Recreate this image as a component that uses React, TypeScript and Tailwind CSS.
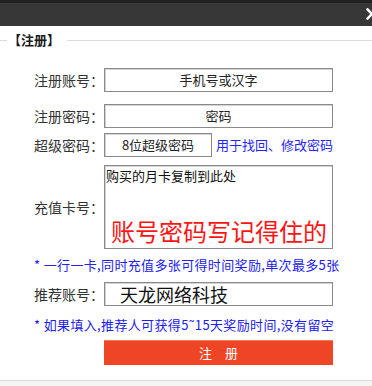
import React from "react";

const font = { fontFamily: '"Noto Sans CJK SC", "Noto Sans", sans-serif' };

function Label({ children }: { children: React.ReactNode }) {
  return (
    <div className="w-[70px] shrink-0 text-[14px] leading-[16px] text-[#333]">{children}</div>
  );
}

const boxCls =
  "border border-[#8a8a8a] shadow-[inset_1px_1px_0_#d4d4d4] bg-white";

export default function App() {
  return (
    <div className="w-[372px] h-[386px] bg-white flex flex-col overflow-hidden" style={font}>
      {/* top bar */}
      <div className="h-[26px] shrink-0 bg-[#373737] border-t-[3px] border-[#222] flex items-center justify-end overflow-hidden">
        <svg width="12" height="12" viewBox="0 0 12 12" className="mr-[-6px] mt-[-2px]">
          <path d="M1.5 1.5 L10.5 10.5 M10.5 1.5 L1.5 10.5" stroke="#fff" strokeWidth="2.6" strokeLinecap="square" />
        </svg>
      </div>

      {/* legend */}
      <div className="h-[28px] shrink-0 flex items-center">
        <div className="w-[7px] h-px bg-[#dcdcdc]" />
        <div className="text-[13px] leading-[16px] font-bold text-[#1a1a1a] px-[1px]">【注册】</div>
        <div className="flex-1 h-px bg-[#dcdcdc] ml-[6px]" />
      </div>

      <div className="pl-[34px] flex flex-col">
        <div className="mt-[14px] flex items-center">
          <Label>注册账号：</Label>
          <div className={`${boxCls} w-[229px] h-[24px] flex items-center justify-center text-[13px] text-[#222]`}>
            手机号或汉字
          </div>
        </div>

        <div className="mt-[12px] flex items-center">
          <Label>注册密码：</Label>
          <div className={`${boxCls} w-[229px] h-[24px] flex items-center justify-center text-[13px] text-[#222]`}>
            密码
          </div>
        </div>

        <div className="mt-[5px] flex items-center">
          <Label>超级密码：</Label>
          <div className={`${boxCls} w-[108px] h-[24px] flex items-center justify-center text-[13px] text-[#222]`}>
            8位超级密码
          </div>
          <div className="ml-[4px] text-[13px] leading-[16px] text-[#2424ff]">用于找回、修改密码</div>
        </div>

        <div className="mt-[8px] flex items-center">
          <Label>充值卡号：</Label>
          <div className={`${boxCls} w-[229px] h-[84px] flex flex-col justify-between`}>
            <div className="text-[13px] leading-[15px] text-[#111] pl-[1px] pt-[2px]">购买的月卡复制到此处</div>
            <div className="text-[24px] leading-[28px] text-[#ff1414] pl-[6px] pb-[3px]">账号密码写记得住的</div>
          </div>
        </div>

        <div className="mt-[8px] h-[16px] text-[13px] leading-[16px] tracking-[0.35px] text-[#2020f0]">* 一行一卡,同时充值多张可得时间奖励,单次最多5张</div>

        <div className="mt-[9px] flex items-center">
          <Label>推荐账号：</Label>
          <div className={`${boxCls} w-[229px] h-[24px] flex items-center pl-[15px] text-[18px] leading-[20px] text-[#111]`}>
            天龙网络科技
          </div>
        </div>

        <div className="mt-[11px] h-[16px] text-[13px] leading-[16px] tracking-[0.35px] text-[#2020f0]">* 如果填入,推荐人可获得5˜15天奖励时间,没有留空</div>

        <div className="mt-[7px] flex">
          <div className="w-[70px] shrink-0" />
          <div className="w-[229px] h-[25px] bg-[#ee4526] border-t border-[#f47a60] flex items-center justify-center text-[13px] text-white">
            注　册
          </div>
        </div>
      </div>

      <div className="mt-[15px] flex-1 border-t border-[#dadada] bg-[#f4f4f4]" />
    </div>
  );
}
